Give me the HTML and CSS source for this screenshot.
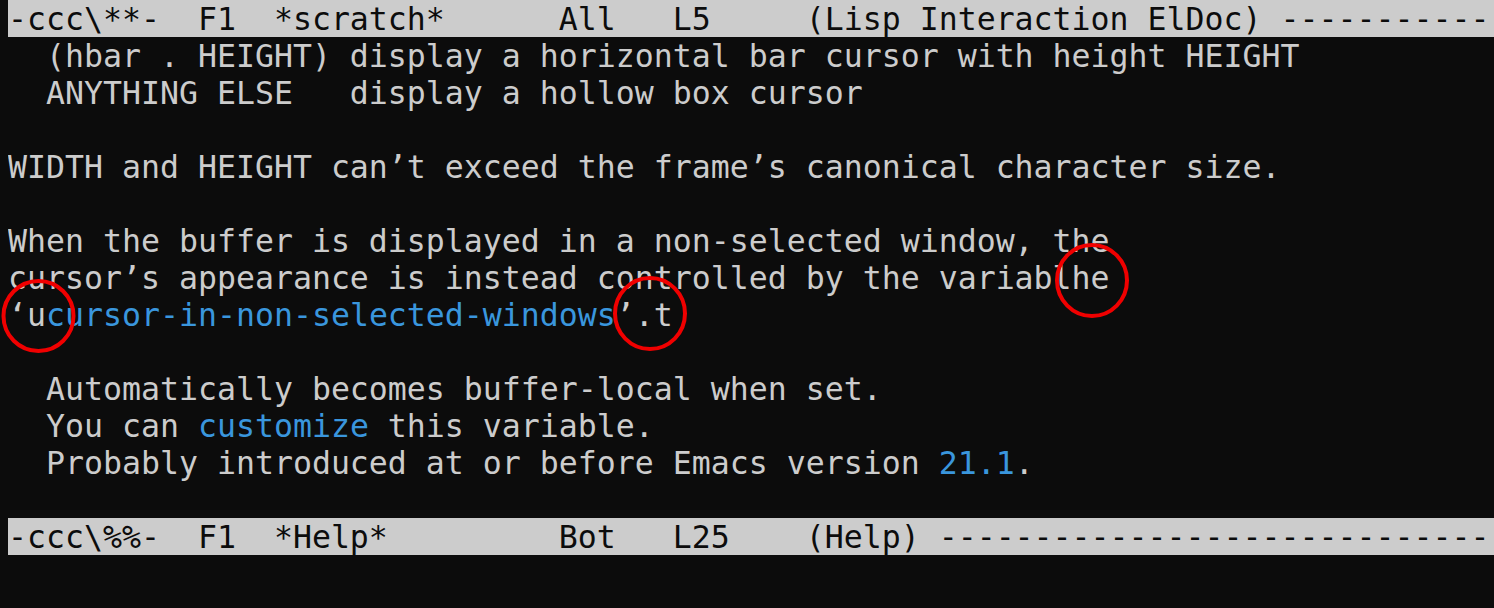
FILE: index.html
```html
<!DOCTYPE html>
<html>
<head>
<meta charset="utf-8">
<link rel="stylesheet" href="styles.css">
</head>
<body>
<div class="screen">
<div class="row modeline">-ccc\**-  F1  *scratch*      All   L5     (Lisp Interaction ElDoc) --------------------------------------------------</div>
<div class="row">  (hbar . HEIGHT) display a horizontal bar cursor with height HEIGHT</div>
<div class="row">  ANYTHING ELSE   display a hollow box cursor</div>
<div class="row"> </div>
<div class="row">WIDTH and HEIGHT can’t exceed the frame’s canonical character size.</div>
<div class="row"> </div>
<div class="row">When the buffer is displayed in a non-selected window, the</div>
<div class="row">cursor’s appearance is instead controlled by the variablhe</div>
<div class="row">‘u<span class="link">cursor-in-non-selected-windows</span>’.t</div>
<div class="row"> </div>
<div class="row">  Automatically becomes buffer-local when set.</div>
<div class="row">  You can <span class="link">customize</span> this variable.</div>
<div class="row">  Probably introduced at or before Emacs version <span class="link">21.1</span>.</div>
<div class="row"> </div>
<div class="row modeline">-ccc\%%-  F1  *Help*         Bot   L25    (Help) ------------------------------------------------------------------</div>
<div class="row"> </div>
</div>
<svg class="marks" width="1494" height="608" viewBox="0 0 1494 608">
  <ellipse cx="38.5" cy="316" rx="35" ry="35" />
  <ellipse cx="650" cy="313.5" rx="35" ry="35.5" />
  <ellipse cx="1092" cy="280.5" rx="35" ry="35.5" />
</svg>
</body>
</html>
```
FILE: styles.css
```css
html, body {
  margin: 0;
  padding: 0;
  background: #0c0c0c;
  width: 1494px;
  height: 608px;
  overflow: hidden;
}
.screen {
  padding: 0 0 0 8px;
  font-family: "DejaVu Sans Mono", monospace;
  font-size: 31.56px;
  line-height: 36px;
  color: #cccccc;
  display: flex;
  flex-direction: column;
}
.row {
  box-sizing: border-box;
  height: 37px;
  padding-top: 1px;
  white-space: pre;
  overflow: hidden;
}
.modeline {
  background: #cccccc;
  color: #0c0c0c;
}
.link {
  color: #3a96dd;
}
.marks {
  position: absolute;
  left: 0;
  top: 0;
  pointer-events: none;
}
.marks ellipse {
  fill: none;
  stroke: #f00000;
  stroke-width: 4;
}
```
